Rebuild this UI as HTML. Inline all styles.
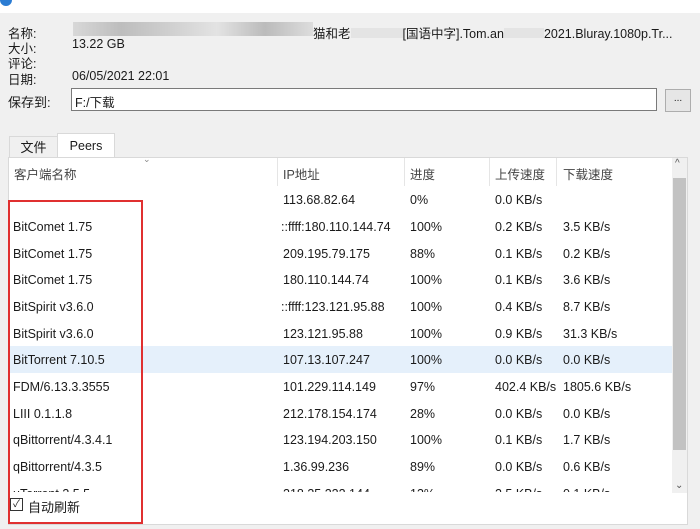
<!DOCTYPE html><html><head><meta charset="utf-8"><style>
body{margin:0;width:700px;height:529px;overflow:hidden;background:#f0f0f0;font-family:"Liberation Sans","Noto Sans CJK SC",sans-serif;font-size:12.5px;color:#1a1a1a;position:relative}
.a{position:absolute;white-space:nowrap}
.row{position:absolute;left:9px;width:663px;height:27px}
.row span{position:absolute;top:7px}
</style></head><body>
<div class="a" style="left:0;top:0;width:700px;height:13px;background:#fff"></div>
<div class="a" style="left:0;top:-6px;width:12px;height:12px;border-radius:50%;background:#2b7cd3"></div>
<div class="a" style="left:8px;top:23px">名称:</div>
<div class="a" style="left:8px;top:38px">大小:</div>
<div class="a" style="left:8px;top:53px">评论:</div>
<div class="a" style="left:8px;top:69px">日期:</div>
<div class="a" style="left:8px;top:92px;font-size:13px">保存到:</div>
<div class="a" style="left:73px;top:22px;width:240px;height:14px;background:linear-gradient(90deg,#d8d8d8,#bdbdbd,#cfcfcf,#e3e3e3,#bbb,#ddd)"></div>
<div class="a" style="left:313px;top:23px">猫和老<span style="display:inline-block;width:52px;height:10px;background:#e4e4e4"></span>[国语中字].Tom.an<span style="display:inline-block;width:40px;height:10px;background:#e4e4e4"></span>2021.Bluray.1080p.Tr...</div>
<div class="a" style="left:72px;top:37px">13.22 GB</div>
<div class="a" style="left:72px;top:69px">06/05/2021 22:01</div>
<div class="a" style="left:71px;top:88px;width:584px;height:21px;background:#fff;border:1px solid #7a7a7a"></div>
<div class="a" style="left:75px;top:92px">F:/下载</div>
<div class="a" style="left:665px;top:89px;width:24px;height:21px;background:#e6e6e6;border:1px solid #adadad;text-align:center;font-size:10px;line-height:18px">...</div>
<div class="a" style="left:9px;top:136px;width:47px;height:21px;border:1px solid #d9d9d9;border-bottom:none;text-align:center;line-height:21px;font-size:13px">文件</div>
<div class="a" style="left:57px;top:133px;width:56px;height:25px;background:#fff;border:1px solid #d9d9d9;border-bottom:none;text-align:center;line-height:24px">Peers</div>
<div class="a" style="left:8px;top:157px;width:680px;height:368px;background:#fff;border:1px solid #d9d9d9;box-sizing:border-box"></div>
<div class="a" style="left:9px;top:158px;width:663px;height:28px;color:#444">
<span class="a" style="left:5px;top:6px">客户端名称</span><span class="a" style="left:134px;top:-4px;font-size:9px;color:#888">⌄</span>
<span class="a" style="left:268px;top:0;width:1px;height:28px;background:#e5e5e5"></span><span class="a" style="left:274px;top:6px">IP地址</span>
<span class="a" style="left:395px;top:0;width:1px;height:28px;background:#e5e5e5"></span><span class="a" style="left:401px;top:6px">进度</span>
<span class="a" style="left:480px;top:0;width:1px;height:28px;background:#e5e5e5"></span><span class="a" style="left:486px;top:6px">上传速度</span>
<span class="a" style="left:547px;top:0;width:1px;height:28px;background:#e5e5e5"></span><span class="a" style="left:554px;top:6px">下载速度</span></div>
<div class="a" style="left:672px;top:158px;width:15px;height:335px;background:#f0f0f0"></div>
<div class="a" style="left:675px;top:158px;font-size:10px;color:#555">^</div>
<div class="a" style="left:673px;top:178px;width:13px;height:272px;background:#c2c2c2"></div>
<div class="a" style="left:675px;top:480px;font-size:10px;color:#555">⌄</div>
<div class="a" style="left:9px;top:186px;width:663px;height:306px;overflow:hidden">
<div class="row" style="left:0;top:0"><span style="left:274px">113.68.82.64</span><span style="left:401px">0%</span><span style="left:486px">0.0 KB/s</span></div>
<div class="row" style="left:0;top:27px"><span style="left:4px">BitComet 1.75</span><span style="left:272px">::ffff:180.110.144.74</span><span style="left:401px">100%</span><span style="left:486px">0.2 KB/s</span><span style="left:554px">3.5 KB/s</span></div>
<div class="row" style="left:0;top:54px"><span style="left:4px">BitComet 1.75</span><span style="left:274px">209.195.79.175</span><span style="left:401px">88%</span><span style="left:486px">0.1 KB/s</span><span style="left:554px">0.2 KB/s</span></div>
<div class="row" style="left:0;top:80px"><span style="left:4px">BitComet 1.75</span><span style="left:274px">180.110.144.74</span><span style="left:401px">100%</span><span style="left:486px">0.1 KB/s</span><span style="left:554px">3.6 KB/s</span></div>
<div class="row" style="left:0;top:107px"><span style="left:4px">BitSpirit v3.6.0</span><span style="left:272px">::ffff:123.121.95.88</span><span style="left:401px">100%</span><span style="left:486px">0.4 KB/s</span><span style="left:554px">8.7 KB/s</span></div>
<div class="row" style="left:0;top:134px"><span style="left:4px">BitSpirit v3.6.0</span><span style="left:274px">123.121.95.88</span><span style="left:401px">100%</span><span style="left:486px">0.9 KB/s</span><span style="left:554px">31.3 KB/s</span></div>
<div class="row" style="left:0;top:160px;background:#e5f0fb"><span style="left:4px">BitTorrent 7.10.5</span><span style="left:274px">107.13.107.247</span><span style="left:401px">100%</span><span style="left:486px">0.0 KB/s</span><span style="left:554px">0.0 KB/s</span></div>
<div class="row" style="left:0;top:187px"><span style="left:4px">FDM/6.13.3.3555</span><span style="left:274px">101.229.114.149</span><span style="left:401px">97%</span><span style="left:486px">402.4 KB/s</span><span style="left:554px">1805.6 KB/s</span></div>
<div class="row" style="left:0;top:214px"><span style="left:4px">LIII 0.1.1.8</span><span style="left:274px">212.178.154.174</span><span style="left:401px">28%</span><span style="left:486px">0.0 KB/s</span><span style="left:554px">0.0 KB/s</span></div>
<div class="row" style="left:0;top:240px"><span style="left:4px">qBittorrent/4.3.4.1</span><span style="left:274px">123.194.203.150</span><span style="left:401px">100%</span><span style="left:486px">0.1 KB/s</span><span style="left:554px">1.7 KB/s</span></div>
<div class="row" style="left:0;top:267px"><span style="left:4px">qBittorrent/4.3.5</span><span style="left:274px">1.36.99.236</span><span style="left:401px">89%</span><span style="left:486px">0.0 KB/s</span><span style="left:554px">0.6 KB/s</span></div>
<div class="row" style="left:0;top:294px"><span style="left:4px">uTorrent 3.5.5</span><span style="left:274px">218.35.222.144</span><span style="left:401px">13%</span><span style="left:486px">2.5 KB/s</span><span style="left:554px">0.1 KB/s</span></div>
</div>
<div class="a" style="left:10px;top:498px;width:11px;height:11px;border:1px solid #333;font-size:10px;line-height:11px;text-align:center">✓</div>
<div class="a" style="left:28px;top:497px;font-size:13px">自动刷新</div>
<div class="a" style="left:8px;top:200px;width:131px;height:320px;border:2px solid #e03030"></div>
</body></html>
